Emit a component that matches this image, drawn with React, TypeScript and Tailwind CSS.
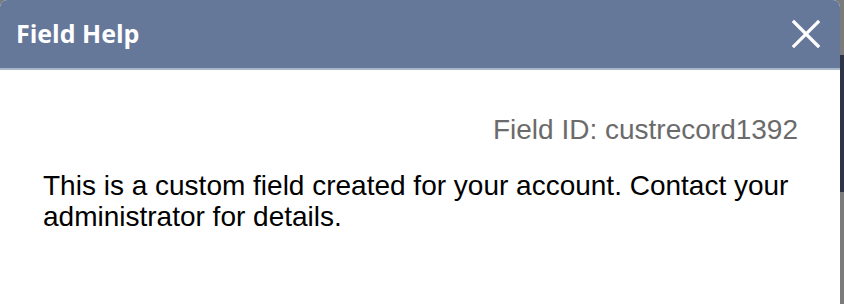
import React from "react";

export default function App() {
  return (
    <div className="w-[844px] h-[304px] relative overflow-hidden bg-[#7b7b7b]">
      <div className="absolute right-0 top-[55px] w-[4px] h-[137px] bg-[#2c3446]" />
      <div className="relative w-[840px] h-[304px] flex flex-col bg-white rounded-t-[7px] overflow-hidden">
        <div className="h-[70px] shrink-0 flex items-center justify-between bg-[#66789a] border-b-2 border-[#a9b6c8] pl-[16px] pr-[19px]">
          <span className="text-white font-bold text-[25px] leading-none pb-[2px]" style={{ fontFamily: '"Open Sans", sans-serif' }}>
            Field Help
          </span>
          <svg width="30" height="30" viewBox="0 0 30 30" className="mb-[1px]">
            <path d="M3 3 L27 27 M27 3 L3 27" stroke="white" strokeWidth="3.2" strokeLinecap="square" />
          </svg>
        </div>
        <div className="flex flex-col pt-[44px] pl-[43px] pr-[42px]" style={{ fontFamily: '"Liberation Sans", Arial, sans-serif' }}>
          <div className="text-right text-[#6b6b6b] text-[28px] leading-[31px]">
            Field ID: custrecord1392
          </div>
          <p className="mt-[25px] text-black text-[28px] leading-[31px]">
            This is a custom field created for your account. Contact your administrator for details.
          </p>
        </div>
      </div>
    </div>
  );
}
